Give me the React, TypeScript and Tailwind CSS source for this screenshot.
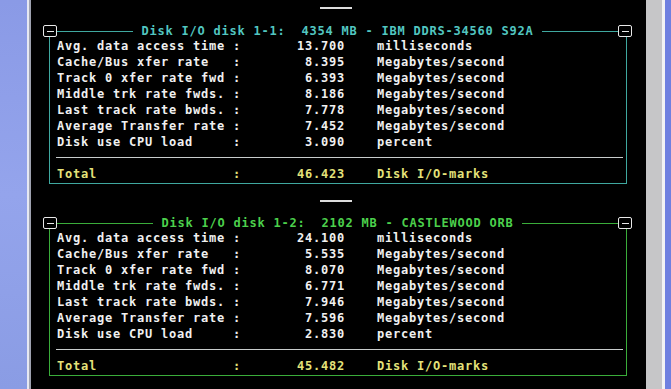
import React from "react";

type Row = { label: string; value: string; unit: string };

const units = {
  ms: "milliseconds",
  mb: "Megabytes/second",
  pct: "percent",
};

const labels = [
  "Avg. data access time",
  "Cache/Bus xfer rate",
  "Track 0 xfer rate fwd",
  "Middle trk rate fwds.",
  "Last track rate bwds.",
  "Average Transfer rate",
  "Disk use CPU load",
];

function mkRows(values: string[]): Row[] {
  return labels.map((label, i) => ({
    label,
    value: values[i],
    unit: i === 0 ? units.ms : i === 6 ? units.pct : units.mb,
  }));
}

const panels = [
  {
    title: "Disk I/O disk 1-1:  4354 MB - IBM DDRS-34560 S92A",
    rows: mkRows(["13.700", "8.395", "6.393", "8.186", "7.778", "7.452", "3.090"]),
    total: "46.423",
    line: "bg-[#3fa89f]",
    border: "border-[#3fa89f]",
    titleColor: "text-[#52c6c0]",
    topGap: "mt-[7px]",
    panelGap: "mt-[16px]",
  },
  {
    title: "Disk I/O disk 1-2:  2102 MB - CASTLEWOOD ORB",
    rows: mkRows(["24.100", "5.535", "8.070", "6.771", "7.946", "7.596", "2.830"]),
    total: "45.482",
    line: "bg-[#3aad3a]",
    border: "border-[#3aad3a]",
    titleColor: "text-[#4cd04c]",
    topGap: "mt-[16px]",
    panelGap: "mt-[15px]",
  },
];

function BoxIcon() {
  return (
    <div className="w-[14px] h-[12px] shrink-0 border border-[#e8e8e8] rounded-[2px] flex items-center justify-center">
      <div className="w-[7px] h-[1px] bg-[#e8e8e8]" />
    </div>
  );
}

function DataRow({ label, value, unit, color }: { label: string; value: string; unit: string; color: string }) {
  return (
    <div className={`flex h-[16px] leading-[16px] pl-[7px] whitespace-pre ${color}`}>
      <span className="w-[176px] shrink-0">{label}</span>
      <span className="w-[56px] shrink-0">:</span>
      <span className="w-[56px] shrink-0 text-right">{value}</span>
      <span className="ml-[32px]">{unit}</span>
    </div>
  );
}

function Panel({ p }: { p: (typeof panels)[number] }) {
  return (
    <div>
      <div className={`${p.topGap} ml-[289px] w-[32px] h-[2px] bg-[#dcdcdc]`} />
      <div className={`${p.panelGap} ml-[12px] w-[589px]`}>
        <div className="flex items-center h-[12px]">
          <BoxIcon />
          <div className={`flex-1 h-[1px] ${p.line}`} />
          <span className={`px-[8px] leading-[12px] whitespace-pre ${p.titleColor}`}>{p.title}</span>
          <div className={`flex-1 h-[1px] ${p.line}`} />
          <BoxIcon />
        </div>
        <div className={`ml-[6px] mr-[5px] border-x border-b ${p.border} pt-[1px] pb-[1px]`}>
          {p.rows.map((r) => (
            <DataRow key={r.label} label={r.label} value={r.value} unit={r.unit} color="text-[#f0f0f0]" />
          ))}
          <div className="mt-[7px] ml-[6px] mr-[3px] h-[1px] bg-[#c8cccc]" />
          <div className="mt-[8px]">
            <DataRow label="Total" value={p.total} unit="Disk I/O-marks" color="text-[#e4e27a]" />
          </div>
        </div>
      </div>
    </div>
  );
}

export default function App() {
  return (
    <div
      className="flex w-[671px] h-[389px] overflow-hidden bg-black text-[12px] font-bold tracking-[0.78px]"
      style={{ fontFamily: '"DejaVu Sans Mono", "Liberation Mono", monospace' }}
    >
      <div className="w-[27px] shrink-0 bg-gradient-to-b from-[#8a9ae6] via-[#94a4ec] to-[#8a9ce4]" />
      <div className="w-[2px] shrink-0 bg-[#e6e8f2]" />
      <div className="w-[2px] shrink-0 bg-[#9ea2b0]" />
      <div className="w-[615px] shrink-0 bg-black">
        {panels.map((p) => (
          <Panel key={p.title} p={p} />
        ))}
      </div>
      <div className="w-[16px] shrink-0 bg-[#c6c6c8]" />
      <div className="w-[3px] shrink-0 bg-[#f2f2f4]" />
      <div className="flex-1 bg-[#6f80e0]" />
    </div>
  );
}
